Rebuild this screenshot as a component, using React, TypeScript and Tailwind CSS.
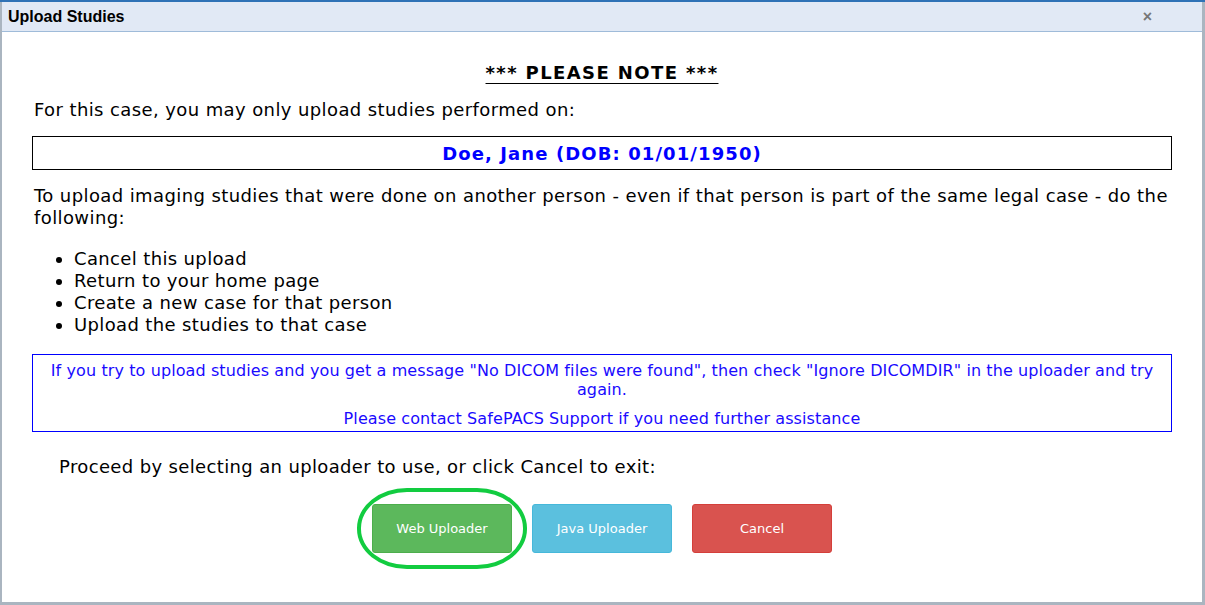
import React from "react";

export default function App() {
  const verdana = { fontFamily: '"DejaVu Sans", Verdana, sans-serif' } as React.CSSProperties;
  return (
    <div className="w-[1205px] h-[605px] bg-[#aab5c0] overflow-hidden flex flex-col">
      <div className="h-[2px] bg-[#2f72b6] shrink-0" />
      <div className="flex-1 ml-[2px] mr-[3px] mb-[3px] bg-white flex flex-col">
        <div className="h-[30px] shrink-0 bg-[#e1e9f5] border-b border-[#9fbbd9] flex items-center justify-between pl-[6px] pr-[50px]">
          <span className="text-[16px] font-bold text-black" style={{ fontFamily: '"Liberation Sans", Arial, sans-serif' }}>
            Upload Studies
          </span>
          <span className="text-[16px] font-bold text-[#777] leading-none" style={{ fontFamily: '"Liberation Sans", Arial, sans-serif' }}>
            ×
          </span>
        </div>
        <div className="px-[30px] pt-[30px] text-black" style={verdana}>
          <div className="text-center text-[18px] leading-[22px] font-bold underline underline-offset-[4px] tracking-[1.4px]">
            *** PLEASE NOTE ***
          </div>
          <div className="mt-[15px] pl-[2px] text-[18px] leading-[22px] tracking-[0.4px]">
            For this case, you may only upload studies performed on:
          </div>
          <div className="mt-[15px] h-[34px] border border-black flex items-center justify-center text-[18px] font-bold text-[#0000ff] tracking-[1.1px]">
            Doe, Jane (DOB: 01/01/1950)
          </div>
          <div className="mt-[15px] pl-[2px] text-[18px] leading-[22px] tracking-[0.4px]">
            To upload imaging studies that were done on another person - even if that person is part of the same legal case - do the following:
          </div>
          <ul className="mt-[19px] pl-[42px] list-disc text-[18px] leading-[22px] tracking-[0.36px]">
            <li>Cancel this upload</li>
            <li>Return to your home page</li>
            <li>Create a new case for that person</li>
            <li>Upload the studies to that case</li>
          </ul>
          <div className="mt-[18px] h-[78px] border border-[#0000ff] text-[#1a0aff] text-[16px] text-center pt-[6px] px-[10px] tracking-[0.1px]">
            <div className="leading-[19px]">
              If you try to upload studies and you get a message "No DICOM files were found", then check "Ignore DICOMDIR" in the uploader and try again.
            </div>
            <div className="leading-[19px] mt-[10px]">Please contact SafePACS Support if you need further assistance</div>
          </div>
          <div className="mt-[24px] pl-[27px] text-[18px] leading-[22px] tracking-[0.36px]">
            Proceed by selecting an uploader to use, or click Cancel to exit:
          </div>
          <div className="mt-[26px] flex justify-center gap-[20px]">
            <div className="relative">
              <button className="w-[140px] h-[49px] rounded-[3px] bg-[#5cb85c] border border-[#4cae4c] text-white text-[13px]" style={verdana}>
                Web Uploader
              </button>
              <div className="absolute left-[-15px] top-[-16px] w-[170px] h-[81px] border-[4px] border-[#12cc40] rounded-[50px/40px] pointer-events-none" />
            </div>
            <button className="w-[140px] h-[49px] rounded-[3px] bg-[#5bc0de] border border-[#46b8da] text-white text-[13px]" style={verdana}>
              Java Uploader
            </button>
            <button className="w-[140px] h-[49px] rounded-[3px] bg-[#d9534f] border border-[#d43f3a] text-white text-[13px]" style={verdana}>
              Cancel
            </button>
          </div>
        </div>
      </div>
    </div>
  );
}
